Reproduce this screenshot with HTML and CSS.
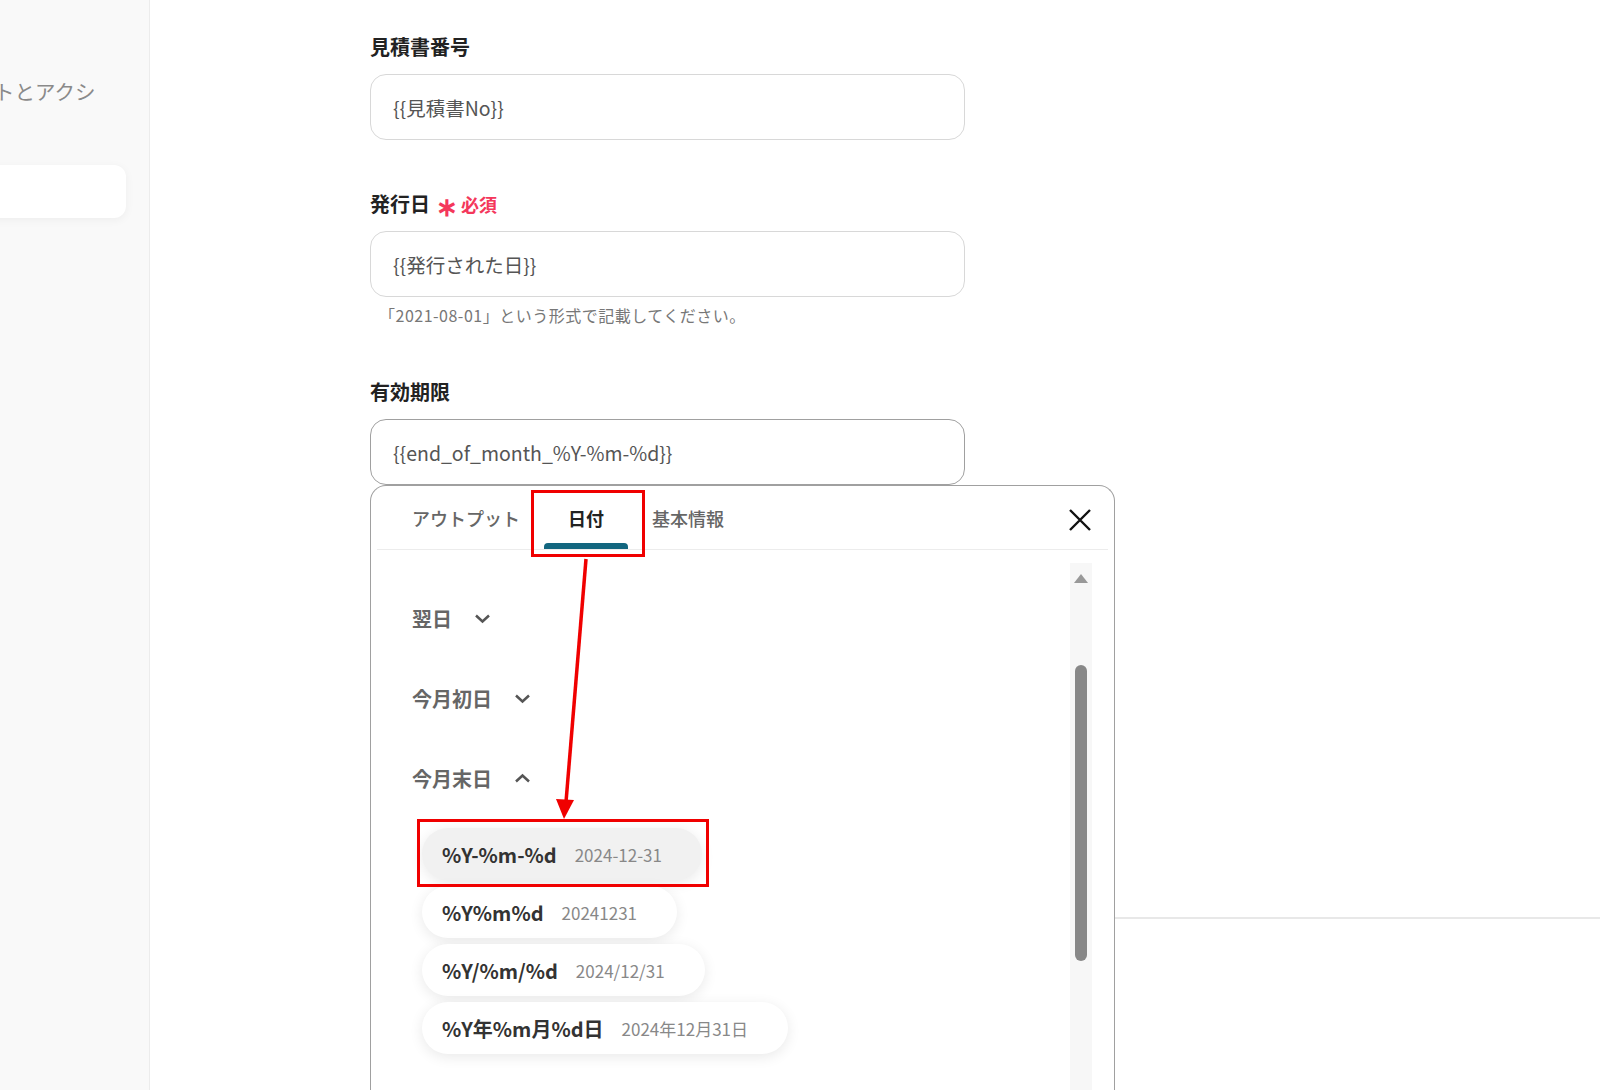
FILE: index.html
```html
<!DOCTYPE html>
<html lang="ja">
<head>
  <meta charset="UTF-8" />
  <title>見積書の作成</title>
  <link rel="stylesheet" href="styles.css">
</head>
<body>
<div class="layout">

  <aside class="sidebar">
    <div class="side-title">トとアクシ</div>
    <div class="side-card"></div>
  </aside>

  <main class="main">
    <div class="form">
      <div class="field">
        <label class="label">見積書番号</label>
        <div class="input">{{見積書No}}</div>
      </div>

      <div class="field field-hint">
        <label class="label">発行日<span class="req"><span class="star">∗</span>必須</span></label>
        <div class="input">{{発行された日}}</div>
        <div class="hint">「2021-08-01」という形式で記載してください。</div>
      </div>

      <div class="field field-open">
        <label class="label">有効期限</label>
        <div class="input input-focus">{{end_of_month_%Y-%m-%d}}</div>

        <!-- 変数ピッカー -->
        <div class="picker">
          <div class="tabs">
            <div class="tab">アウトプット</div>
            <div class="tab active">日付</div>
            <div class="tab">基本情報</div>
            <div class="close">
              <svg width="24" height="24" viewBox="0 0 24 24"><path d="M2 2 L22 22 M22 2 L2 22" stroke="#111" stroke-width="2.4" fill="none"/></svg>
            </div>
          </div>
          <div class="picker-body">
            <div class="picker-list">
              <div class="group">
                <span>翌日</span>
                <svg width="17" height="11" viewBox="0 0 17 11"><path d="M2 2.5 L8.5 8.5 L15 2.5" stroke="#555" stroke-width="2.5" fill="none"/></svg>
              </div>
              <div class="group">
                <span>今月初日</span>
                <svg width="17" height="11" viewBox="0 0 17 11"><path d="M2 2.5 L8.5 8.5 L15 2.5" stroke="#555" stroke-width="2.5" fill="none"/></svg>
              </div>
              <div class="group">
                <span>今月末日</span>
                <svg width="17" height="11" viewBox="0 0 17 11"><path d="M2 8.5 L8.5 2.5 L15 8.5" stroke="#555" stroke-width="2.5" fill="none"/></svg>
              </div>
              <div class="chips">
                <div class="chip chip-hover"><span class="chip-key">%Y-%m-%d</span><span class="chip-val">2024-12-31</span></div>
                <div class="chip"><span class="chip-key">%Y%m%d</span><span class="chip-val">20241231</span></div>
                <div class="chip"><span class="chip-key">%Y/%m/%d</span><span class="chip-val">2024/12/31</span></div>
                <div class="chip"><span class="chip-key">%Y年%m月%d日</span><span class="chip-val">2024年12月31日</span></div>
              </div>
            </div>
            <div class="scroll">
              <div class="scroll-up"></div>
              <div class="scroll-thumb"></div>
            </div>
          </div>
        </div>
      </div>
    </div>
    <div class="divider"></div>
  </main>

  <!-- 注釈 (赤枠と矢印) -->
  <svg class="annot" width="1600" height="1090" viewBox="0 0 1600 1090">
    <rect x="532.5" y="491.5" width="111" height="64" fill="none" stroke="#f00000" stroke-width="3"/>
    <rect x="418.5" y="820.5" width="289" height="65" fill="none" stroke="#f00000" stroke-width="3"/>
    <line x1="586" y1="559" x2="566" y2="802" stroke="#f00000" stroke-width="3.5"/>
    <polygon points="556,799 574,800 564,819" fill="#f00000"/>
  </svg>

</div>
</body>
</html>
```

FILE: styles.css
```css
html, body {
  margin: 0;
  padding: 0;
  height: 100%;
  overflow: hidden;
  background: #fff;
  color: #333;
  font-family: "Noto Sans CJK JP", "Noto Sans", sans-serif;
}

.layout {
  position: relative;
  display: flex;
  height: 1090px;
}

/* sidebar */
.sidebar {
  width: 150px;
  flex: none;
  box-sizing: border-box;
  padding-top: 77px;
  background: #f9f9f9;
  border-right: 1px solid #ececec;
  overflow: hidden;
}
.side-title {
  margin-left: -6px;
  font-size: 20.5px;
  line-height: 28px;
  color: #8a8a8a;
  white-space: nowrap;
}
.side-card {
  margin-top: 60px;
  margin-left: -20px;
  width: 146px;
  height: 53px;
  background: #fff;
  border-radius: 12px;
  box-shadow: 0 2px 10px rgba(0, 0, 0, 0.05);
}

/* form */
.main {
  flex: 1;
  padding: 33px 0 0 220px;
}
.form {
  width: 595px;
}
.field {
  position: relative;
  margin-bottom: 50px;
}
.field-hint {
  margin-bottom: 52px;
}
.field-open {
  margin-bottom: 0;
}
.label {
  display: block;
  margin-bottom: 13px;
  font-size: 20px;
  line-height: 28px;
  font-weight: 700;
  color: #222;
}
.req {
  margin-left: 6px;
  font-size: 18px;
  color: #f4375b;
}
.star {
  display: inline-block;
  font-size: 26px;
  line-height: 20px;
  position: relative;
  top: 4px;
  margin-right: 3px;
}
.input {
  display: flex;
  align-items: center;
  height: 66px;
  box-sizing: border-box;
  padding: 0 22px;
  border: 1px solid #d8d8d8;
  border-radius: 16px;
  font-size: 19.5px;
  color: #555;
}
.input-focus {
  border-color: #a0a0a0;
}
.hint {
  margin-top: 7px;
  padding-left: 9px;
  font-size: 16px;
  letter-spacing: 0.5px;
  line-height: 22px;
  color: #777;
}
.divider {
  margin-top: 432px;
  border-top: 2px solid #e8e8e8;
}

/* picker */
.picker {
  position: absolute;
  top: 100%;
  left: 0;
  z-index: 2;
  width: 745px;
  height: 640px;
  box-sizing: border-box;
  display: flex;
  flex-direction: column;
  background: #fff;
  border: 1px solid #a0a0a0;
  border-bottom: none;
  border-radius: 16px 16px 0 0;
}
.tabs {
  display: flex;
  align-items: stretch;
  height: 64px;
  box-sizing: border-box;
  margin: 0 6px;
  padding-left: 11px;
  border-bottom: 1px solid #ececec;
}
.tab {
  position: relative;
  display: flex;
  align-items: center;
  padding: 0 24px;
  font-size: 18px;
  font-weight: 500;
  color: #666;
}
.tab.active {
  font-weight: 700;
  color: #222;
}
.tab.active::after {
  content: "";
  position: absolute;
  left: 0;
  right: 0;
  bottom: 0;
  height: 6px;
  background: #12667f;
  border-radius: 4px 4px 0 0;
}
.close {
  display: flex;
  align-items: center;
  margin: 4px 16px 0 auto;
}

.picker-body {
  flex: 1;
  display: flex;
  min-height: 0;
}
.picker-list {
  flex: 1;
  padding: 28px 0 0 41px;
}
.group {
  display: flex;
  align-items: center;
  gap: 22px;
  height: 80px;
  font-size: 20px;
  font-weight: 700;
  color: #666;
}
.chips {
  display: flex;
  flex-direction: column;
  align-items: flex-start;
  gap: 6px;
  margin: 10px 0 0 10px;
}
.chip {
  display: inline-flex;
  align-items: center;
  gap: 18px;
  height: 52px;
  box-sizing: border-box;
  padding: 0 40px 0 20px;
  border-radius: 26px;
  background: #fff;
  box-shadow: 0 3px 14px rgba(0, 0, 0, 0.09);
}
.chip-hover {
  background: #f1f1f1;
}
.chip-key {
  font-size: 20px;
  font-weight: 700;
  color: #333;
}
.chip-val {
  font-size: 17px;
  color: #888;
}

.scroll {
  width: 22px;
  margin: 13px 22px 0 0;
  background: #f7f7f7;
}
.scroll-up {
  width: 0;
  height: 0;
  margin: 11px auto 0;
  border-left: 7px solid transparent;
  border-right: 7px solid transparent;
  border-bottom: 9px solid #999;
}
.scroll-thumb {
  width: 12px;
  height: 296px;
  margin: 82px auto 0;
  background: #888;
  border-radius: 6px;
}

/* annotations */
.annot {
  position: absolute;
  left: 0;
  top: 0;
  z-index: 5;
  pointer-events: none;
}
```
